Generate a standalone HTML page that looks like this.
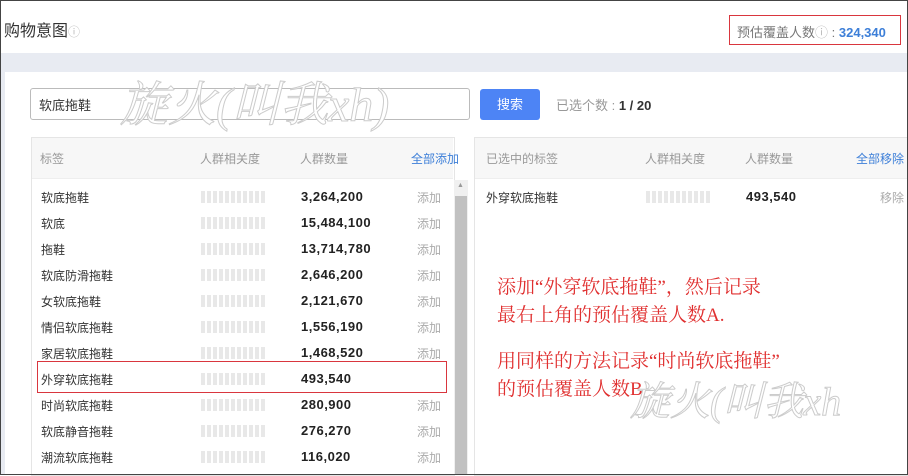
<!DOCTYPE html><html><head><meta charset="utf-8"><style>
body{margin:0;width:908px;height:475px;overflow:hidden;font-family:"Liberation Sans","Noto Sans CJK SC",sans-serif;font-size:12px;color:#333;position:relative;background:#fff}
.frame{position:absolute;left:0;top:0;width:906px;height:473px;border:1px solid #444;}
.ab{position:absolute;white-space:nowrap}
.bar{position:absolute;width:66px;height:12px;background:repeating-linear-gradient(90deg,#e8e8e8 0 4px,#fff 4px 6px)}
.num{font-weight:bold;font-size:13px;color:#222;letter-spacing:0.5px}
.add{color:#aaa}
.red{color:#e03030;font-family:"Liberation Serif","Noto Serif CJK SC",serif;font-size:19px}
</style></head><body>
<div class="ab" style="left:1px;top:53px;width:906px;height:19px;background:#e8ebf2"></div>
<div class="ab" style="left:1px;top:54px;width:4px;height:420px;background:#e8ebf2"></div>
<div class="ab" style="left:4px;top:17px;font-size:16px;color:#333">购物意图<span style="color:#bbb;font-size:12px">ⓘ</span></div>
<div class="ab" style="left:729px;top:15px;width:170px;height:28px;border:1px solid #d9363e"></div>
<div class="ab" style="left:737px;top:22px;color:#777;font-size:13px">预估覆盖人数<span style="color:#bbb">ⓘ</span> : <b style="color:#3d7fd8">324,340</b></div>
<div class="ab" style="left:30px;top:88px;width:438px;height:30px;border:1px solid #bbb;border-radius:3px"></div>
<div class="ab" style="left:39px;top:95px;font-size:13px">软底拖鞋</div>
<div class="ab" style="left:480px;top:89px;width:60px;height:31px;background:#4d84f5;border-radius:3px;color:#fff;text-align:center;line-height:31px;font-size:13px">搜索</div>
<div class="ab" style="left:556px;top:95px;color:#999;font-size:13px">已选个数 : <b style="color:#333">1 / 20</b></div>
<div class="ab" style="left:120px;top:66px;font-size:48px;color:#fff;-webkit-text-stroke:1px #ccc;font-style:italic;font-family:'Liberation Serif','Noto Serif CJK SC',serif">旋火(叫我xh)</div>
<div class="ab" style="left:31px;top:137px;width:422px;height:337px;border:1px solid #e5e5e5"></div>
<div class="ab" style="left:32px;top:138px;width:421px;height:40px;background:#f7f7f7;border-bottom:1px solid #eee"></div>
<div class="ab" style="left:40px;top:150px;color:#999">标签</div>
<div class="ab" style="left:200px;top:150px;color:#999">人群相关度</div>
<div class="ab" style="left:300px;top:150px;color:#999">人群数量</div>
<div class="ab" style="left:411px;top:150px;color:#3d7fd8">全部添加</div>
<div class="ab" style="left:454px;top:180px;width:14px;height:295px;background:#f0f0f0"></div>
<div class="ab" style="left:455px;top:196px;width:12px;height:279px;background:#c1c1c1"></div>
<div class="ab" style="left:457px;top:182px;font-size:7px;color:#999">▲</div>
<div class="ab" style="left:474px;top:137px;width:434px;height:337px;border:1px solid #e5e5e5"></div>
<div class="ab" style="left:475px;top:138px;width:433px;height:40px;background:#f7f7f7;border-bottom:1px solid #eee"></div>
<div class="ab" style="left:486px;top:150px;color:#999">已选中的标签</div>
<div class="ab" style="left:645px;top:150px;color:#999">人群相关度</div>
<div class="ab" style="left:745px;top:150px;color:#999">人群数量</div>
<div class="ab" style="left:856px;top:150px;color:#3d7fd8">全部移除</div>
<div class="ab" style="left:486px;top:189px">外穿软底拖鞋</div>
<div class="bar" style="left:646px;top:191px"></div>
<div class="ab num" style="left:746px;top:189px">493,540</div>
<div class="ab add" style="left:880px;top:189px">移除</div>
<div id="rows"></div>
<div class="ab" style="left:37px;top:361px;width:408px;height:30px;border:1px solid #d9363e"></div>
<div class="ab red" style="left:497px;top:272px">添加“外穿软底拖鞋”，然后记录</div>
<div class="ab red" style="left:497px;top:300px">最右上角的预估覆盖人数A.</div>
<div class="ab red" style="left:497px;top:346px">用同样的方法记录“时尚软底拖鞋”</div>
<div class="ab red" style="left:497px;top:374px">的预估覆盖人数B</div>
<div class="ab" style="left:630px;top:370px;font-size:40px;color:#fff;-webkit-text-stroke:1px #ccc;font-style:italic;font-family:'Liberation Serif','Noto Serif CJK SC',serif">旋火(叫我xh</div>
<script>
var d=[["软底拖鞋","3,264,200"],["软底","15,484,100"],["拖鞋","13,714,780"],["软底防滑拖鞋","2,646,200"],["女软底拖鞋","2,121,670"],["情侣软底拖鞋","1,556,190"],["家居软底拖鞋","1,468,520"],["外穿软底拖鞋","493,540",1],["时尚软底拖鞋","280,900"],["软底静音拖鞋","276,270"],["潮流软底拖鞋","116,020"]];
var h="";d.forEach(function(r,i){var y=189+i*26;h+='<div class="ab" style="left:41px;top:'+y+'px">'+r[0]+'</div><div class="bar" style="left:201px;top:'+(y+2)+'px"></div><div class="ab num" style="left:301px;top:'+y+'px">'+r[1]+'</div>'+(r[2]?'':'<div class="ab add" style="left:417px;top:'+y+'px">添加</div>');});
document.getElementById("rows").innerHTML=h;
</script>
<div class="frame"></div>
</body></html>
